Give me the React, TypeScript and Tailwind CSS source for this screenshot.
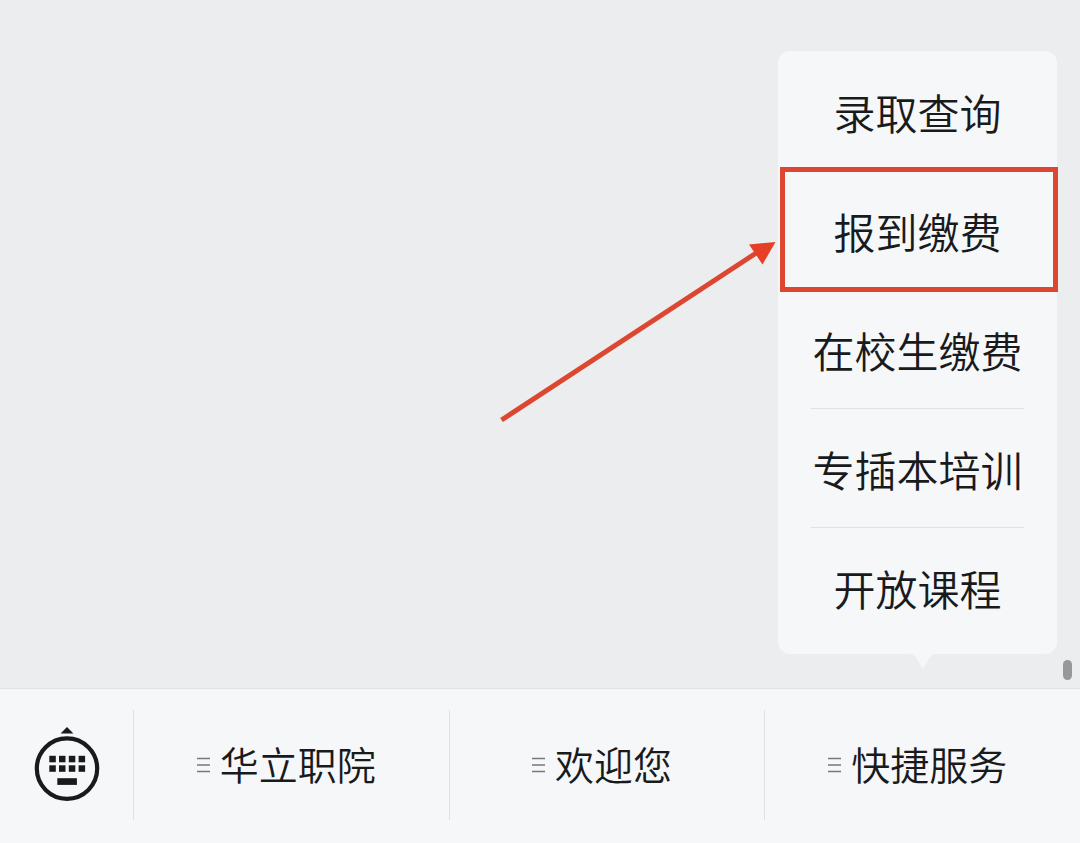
const menuItems = [
  { label: "录取查询" },
  { label: "报到缴费", marked: true },
  { label: "在校生缴费" },
  { label: "专插本培训", divider: true },
  { label: "开放课程", divider: true },
];

const tabs = ["华立职院", "欢迎您", "快捷服务"];

const KeyboardIcon = () => (
  <svg width="66" height="76" viewBox="0 0 66 76" fill="#191a1c" aria-hidden="true">
    <path d="M33 0 L39.4 6.4 H26.6 Z" />
    <circle cx="33" cy="41.6" r="30.2" fill="none" stroke="#191a1c" strokeWidth="4.2" />
    {[15.3, 25, 34.8, 44.6].map((x) => (
      <g key={x}>
        <rect x={x} y="28.8" width="6.5" height="6.5" />
        <rect x={x} y="38.3" width="6.5" height="6.5" />
      </g>
    ))}
    <rect x="23.3" y="51.2" width="19.6" height="6.7" />
  </svg>
);

const LinesIcon = () => (
  <svg width="13" height="16" viewBox="0 0 13 16" aria-hidden="true">
    <path d="M0 1.5H13M0 8H13M0 14.5H13" stroke="#77787b" strokeWidth="1.6" />
  </svg>
);

const Arrow = () => (
  <svg
    className="absolute right-full top-[68px]"
    width="280"
    height="186"
    viewBox="0 0 280 186"
    aria-hidden="true"
  >
    <path d="M3.5 182 L259 14.5" stroke="#dd4731" strokeWidth="5" />
    <path d="M277.5 4 L251 6.5 L264.5 26.5 Z" fill="#e63f26" />
  </svg>
);

const App: React.FC = () => {
  return (
    <div className="flex min-h-screen flex-col bg-[#ebedee] font-['Noto_Sans_CJK_SC',sans-serif] font-[350] text-[#191a1c]">
      <main className="relative flex flex-1 items-end justify-end pr-[23px] pb-[34px]">
        {/* Popup menu */}
        <div className="relative w-[279px] rounded-xl bg-[#f5f7f9] pb-2">
          <ul>
            {menuItems.map((item) => (
              <li key={item.label} className="relative h-[119px] px-[33px]">
                <button
                  className={`h-full w-full border-t pt-0.5 text-[42px] leading-none whitespace-nowrap ${
                    item.divider ? "border-[#dfe1e3]" : "border-transparent"
                  }`}
                >
                  {item.label}
                </button>
                {item.marked && (
                  <>
                    <div className="pointer-events-none absolute -inset-y-[3px] -right-px left-0.5 border-5 border-[#dd4731]" />
                    <Arrow />
                  </>
                )}
              </li>
            ))}
          </ul>
          <svg
            className="absolute top-full left-[133px]"
            width="24"
            height="15"
            viewBox="0 0 24 15"
            aria-hidden="true"
          >
            <path d="M0 0H24C20 1 18.5 3 13.5 13Q12 15.5 10.5 13C5.5 3 4 1 0 0Z" fill="#f5f7f9" />
          </svg>
        </div>

        {/* Scroll thumb */}
        <div className="absolute right-2 bottom-2 h-5 w-[9px] rounded-full bg-[#96989a]" />
      </main>

      {/* Bottom bar */}
      <nav className="flex border-t border-[#e0e2e4] bg-[#f5f7f9] pt-[21px] pb-[23px]">
        <button className="flex h-[110px] w-[133px] items-center justify-center" aria-label="键盘">
          <KeyboardIcon />
        </button>
        {tabs.map((tab) => (
          <button
            key={tab}
            className="flex h-[110px] flex-1 items-center justify-center gap-2.5 border-l border-[#dfe1e3] pr-2.5 text-[39px] leading-none"
          >
            <LinesIcon />
            <span className="pb-1">{tab}</span>
          </button>
        ))}
      </nav>
    </div>
  );
};

export default App;
